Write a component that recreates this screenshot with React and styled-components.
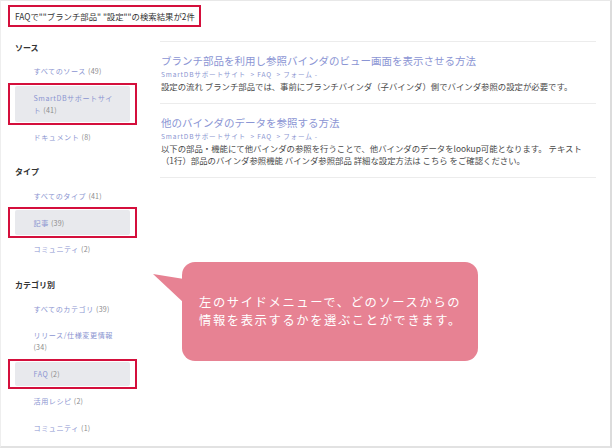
import styled, { createGlobalStyle } from 'styled-components'

const GlobalStyle = createGlobalStyle`
  html, body {
    margin: 0;
    padding: 0;
    background: #ffffff;
  }
  body {
    font-family: "Noto Sans CJK JP", "Noto Sans", sans-serif;
  }
`

const Frame = styled.div`
  position: relative;
  width: 612px;
  height: 448px;
  box-sizing: border-box;
  border-top: 1px solid #e8e8e8;
  border-left: 1px solid #eeeeee;
  border-right: 2px solid #dcdcdc;
  border-bottom: 2px solid #e2e2e2;
  display: flex;
  flex-direction: column;
  overflow: hidden;
`

const Header = styled.div`
  display: flex;
  padding: 4px 0 0 7px;
`

const Highlight = styled.div`
  border: 2px solid #d40f3c;
  padding: 0 4px 0 5px;
  font-size: 8.4px;
  line-height: 18px;
  color: #333;
`

const Body = styled.div`
  display: flex;
  flex: 1;
`

const Sidebar = styled.div`
  width: 159px;
  flex-shrink: 0;
  box-sizing: border-box;
  padding: 13.5px 0 0 14px;
  display: flex;
  flex-direction: column;
  gap: 16px;
`

const Section = styled.div`
  display: flex;
  flex-direction: column;
  gap: 2px;
`

const Heading = styled.div`
  font-size: 8px;
  font-weight: bold;
  line-height: 13px;
  color: #333;
  margin-bottom: 3.6px;
`

const Item = styled.div`
  position: relative;
  width: 115px;
  box-sizing: border-box;
  padding: 6.35px 16px 6.35px 18.5px;
  font-size: 7.1px;
  line-height: 12px;
  letter-spacing: 0.55px;
  white-space: pre-line;
  color: #8b95d1;
  border-radius: 2px;
  background: ${(p) => (p.$selected ? '#e8e9ed' : 'transparent')};

  &::after {
    content: '';
    display: ${(p) => (p.$selected ? 'block' : 'none')};
    position: absolute;
    top: -3px;
    bottom: -3px;
    left: -7px;
    right: -7px;
    border: 2px solid #d40f3c;
  }
`

const Count = styled.span`
  color: #8c8c8c;
  letter-spacing: 0.2px;
`

const Main = styled.div`
  flex: 1;
  padding: 14px 14px 0 0;
`

const ResultList = styled.div`
  border-top: 1px solid #ececec;
`

const Result = styled.div`
  padding: 11px 0 11px 1px;
  border-bottom: 1px solid #ececec;
`

const Title = styled.div`
  font-size: 10.5px;
  line-height: 16px;
  color: #8b95d4;
`

const Crumb = styled.div`
  font-size: 6.6px;
  line-height: 11px;
  letter-spacing: 0.8px;
  color: #8b95d1;
  white-space: pre;
`

const Desc = styled.div`
  padding-right: 6px;
  font-size: 8.4px;
  line-height: 12px;
  color: #4a4a4a;
`

const Callout = styled.div`
  position: absolute;
  left: 181px;
  top: 261px;
  width: 296px;
  height: 99px;
  box-sizing: border-box;
  padding: 0 0 0 17px;
  background: #e78293;
  border-radius: 13px;
  display: flex;
  align-items: center;
  color: #ffffff;
  font-size: 12.3px;
  line-height: 17.5px;
  letter-spacing: 1.6px;
`

const Tail = styled.svg`
  position: absolute;
  left: -29px;
  top: 11px;
`

const sections = [
  {
    title: 'ソース',
    items: [
      { label: 'すべてのソース', count: 49 },
      { label: 'SmartDBサポートサイ\nト', count: 41, selected: true },
      { label: 'ドキュメント', count: 8 },
    ],
  },
  {
    title: 'タイプ',
    items: [
      { label: 'すべてのタイプ', count: 41 },
      { label: '記事', count: 39, selected: true },
      { label: 'コミュニティ', count: 2 },
    ],
  },
  {
    title: 'カテゴリ別',
    items: [
      { label: 'すべてのカテゴリ', count: 39 },
      { label: 'リリース/仕様変更情報', count: 34 },
      { label: 'FAQ', count: 2, selected: true },
      { label: '活用レシピ', count: 2 },
      { label: 'コミュニティ', count: 1 },
    ],
  },
]

const results = [
  {
    title: 'ブランチ部品を利用し参照バインダのビュー画面を表示させる方法',
    desc: '設定の流れ ブランチ部品では、事前にブランチバインダ（子バインダ）側でバインダ参照の設定が必要です。',
  },
  {
    title: '他のバインダのデータを参照する方法',
    desc: '以下の部品・機能にて他バインダの参照を行うことで、他バインダのデータをlookup可能となります。 テキスト（1行）部品のバインダ参照機能 バインダ参照部品 詳細な設定方法は こちら をご確認ください。',
  },
]

export default function App() {
  return (
    <>
      <GlobalStyle />
      <Frame>
        <Header>
          <Highlight>FAQで""ブランチ部品" "設定""の検索結果が2件</Highlight>
        </Header>
        <Body>
          <Sidebar>
            {sections.map((s) => (
              <Section key={s.title}>
                <Heading>{s.title}</Heading>
                {s.items.map((it) => (
                  <Item key={it.label} $selected={it.selected}>
                    {it.label} <Count>({it.count})</Count>
                  </Item>
                ))}
              </Section>
            ))}
          </Sidebar>
          <Main>
            <ResultList>
              {results.map((r) => (
                <Result key={r.title}>
                  <Title>{r.title}</Title>
                  <Crumb>SmartDBサポートサイト  &gt; FAQ  &gt; フォーム -</Crumb>
                  <Desc>{r.desc}</Desc>
                </Result>
              ))}
            </ResultList>
          </Main>
        </Body>
        <Callout>
          <Tail width="32" height="30" viewBox="0 0 32 30">
            <polygon points="0,1 31,6 31,30" fill="#e78293" />
          </Tail>
          左のサイドメニューで、どのソースからの
          <br />
          情報を表示するかを選ぶことができます。
        </Callout>
      </Frame>
    </>
  )
}
